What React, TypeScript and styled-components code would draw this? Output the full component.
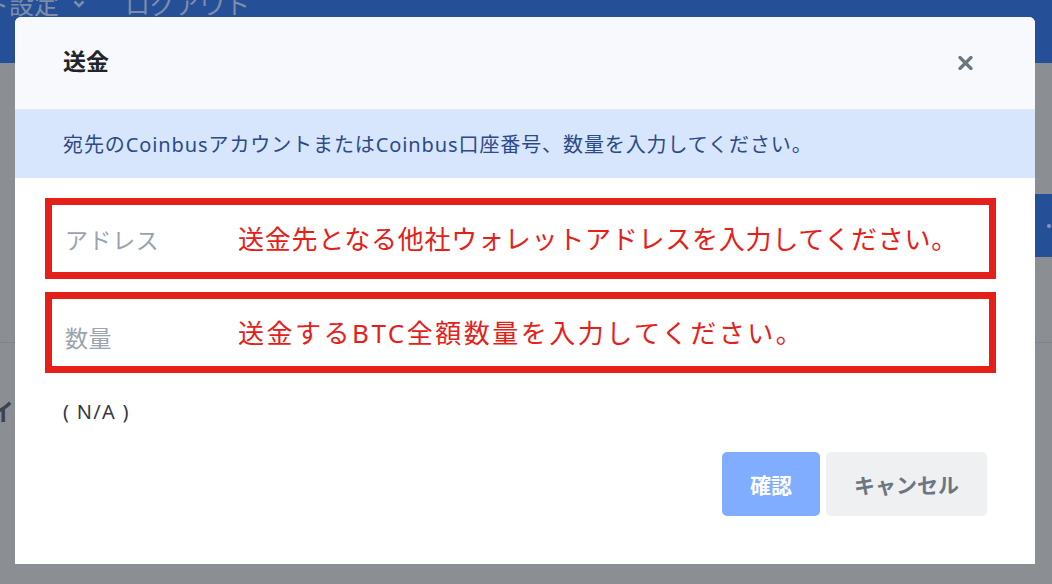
import styled, { createGlobalStyle } from "styled-components";

const GlobalStyle = createGlobalStyle`
  html, body {
    margin: 0;
    padding: 0;
    overflow: hidden;
  }
  body {
    font-family: "Noto Sans", "Noto Sans CJK JP", sans-serif;
  }
`;

const colors = {
  navBlue: "#254f96",
  backdrop: "#8b8e93",
  headerBg: "#f8f9fd",
  infoBg: "#d7e5fd",
  infoText: "#2b4a88",
  red: "#e52019",
  label: "#9aa3ae",
  primary: "#80adff",
  light: "#eff0f2",
  muted: "#6c7683",
};

/* background page, seen through the dimmed backdrop */
const Page = styled.div`
  position: relative;
  width: 100vw;
  height: 100vh;
  overflow: hidden;
  background: ${colors.backdrop};
  display: flex;
  flex-direction: column;
`;

const Nav = styled.nav`
  height: 63px;
  flex-shrink: 0;
  background: ${colors.navBlue};
  display: flex;
  align-items: flex-start;
  gap: 40px;
  font-size: 25px;
  color: #7f8dab;
  overflow: hidden;
`;

const NavItem = styled.span<{ $offset?: number }>`
  display: flex;
  align-items: center;
  gap: 14px;
  margin-top: -13px;
  line-height: 34px;
  margin-left: ${(p) => p.$offset ?? 0}px;
`;

const BgContent = styled.div`
  flex: 1;
  display: flex;
  flex-direction: column;
`;

const BgButtonRow = styled.div`
  display: flex;
  justify-content: flex-end;
  padding-top: 131px;
`;

const BgButton = styled.div`
  width: 60px;
  height: 63px;
  background: ${colors.navBlue};
  display: flex;
  align-items: center;
  justify-content: flex-end;
  padding-right: 1px;
  box-sizing: border-box;
  &::after {
    content: "";
    width: 4px;
    height: 4px;
    border-radius: 50%;
    background: #8a97b5;
  }
`;

const BgDivider = styled.div`
  margin-top: 85px;
  height: 1px;
  background: #7d828d;
`;

const BgHeading = styled.div`
  margin-top: 50px;
  margin-left: -10px;
  font-size: 24px;
  font-weight: 700;
  color: #3c4250;
`;

/* modal */
const Modal = styled.div`
  position: absolute;
  top: 17px;
  left: 15px;
  width: 1020px;
  height: 547px;
  background: #fff;
  border-radius: 6px 6px 0 0;
  overflow: hidden;
  display: flex;
  flex-direction: column;
`;

const ModalHeader = styled.div`
  height: 92px;
  flex-shrink: 0;
  background: ${colors.headerBg};
  border-bottom: 1px solid #e3e7ee;
  display: flex;
  align-items: center;
  justify-content: space-between;
  padding: 0 62px 0 48px;
`;

const Title = styled.h2`
  margin: 0 0 6px;
  font-size: 23px;
  font-weight: 700;
  color: #212529;
`;

const CloseButton = styled.button`
  border: none;
  background: none;
  padding: 0;
  display: flex;
  cursor: pointer;
`;

const InfoBand = styled.div`
  height: 68px;
  flex-shrink: 0;
  background: ${colors.infoBg};
  display: flex;
  align-items: center;
  padding-left: 48px;
  padding-bottom: 2px;
  box-sizing: border-box;
  font-size: 20px;
  letter-spacing: 0.9px;
  color: ${colors.infoText};
`;

const ModalBody = styled.div`
  padding: 20px 39px 0 30px;
  display: flex;
  flex-direction: column;
  gap: 13px;
`;

const FieldBox = styled.div`
  height: 81px;
  box-sizing: border-box;
  border: 7px solid ${colors.red};
  display: flex;
  align-items: center;
  padding-left: 13px;
`;

const FieldLabel = styled.span<{ $shift?: number }>`
  width: 173px;
  flex-shrink: 0;
  font-size: 23px;
  letter-spacing: 0.6px;
  color: ${colors.label};
  margin-top: ${(p) => p.$shift ?? 0}px;
`;

const Note = styled.span<{ $spacing?: number }>`
  font-size: 26px;
  color: ${colors.red};
  letter-spacing: ${(p) => p.$spacing ?? 0}px;
  margin-top: -2px;
  white-space: nowrap;
`;

const Balance = styled.div`
  margin: 14px 0 0 18px;
  font-size: 20px;
  line-height: 24px;
  letter-spacing: 1.3px;
  color: #343a40;
`;

const Footer = styled.div`
  display: flex;
  justify-content: flex-end;
  gap: 6px;
  margin: 15px 9px 0 0;
`;

const Button = styled.button<{ $variant: "primary" | "light" }>`
  height: 64px;
  border: none;
  border-radius: 5px;
  padding: 0 28px;
  font-family: inherit;
  font-size: 21px;
  font-weight: 700;
  background: ${(p) => (p.$variant === "primary" ? colors.primary : colors.light)};
  color: ${(p) => (p.$variant === "primary" ? "#fff" : colors.muted)};
  cursor: pointer;
`;

const Chevron = () => (
  <svg width="12" height="8" viewBox="0 0 12 8">
    <path d="M1.5 1.5 6 6l4.5-4.5" fill="none" stroke="#7f8dab" strokeWidth="2.6" />
  </svg>
);

const CloseIcon = () => (
  <svg width="15" height="14" viewBox="0 0 15 14">
    <path d="M2 1.5 13 12.5M13 1.5 2 12.5" stroke="#6c7683" strokeWidth="3.2" strokeLinecap="round" />
  </svg>
);

const App = () => {
  return (
    <Page>
      <GlobalStyle />
      <Nav>
        <NavItem $offset={-16}>
          ト設定 <Chevron />
        </NavItem>
        <NavItem>ログアウト</NavItem>
      </Nav>
      <BgContent>
        <BgButtonRow>
          <BgButton />
        </BgButtonRow>
        <BgDivider />
        <BgHeading>イ.</BgHeading>
      </BgContent>

      <Modal>
        <ModalHeader>
          <Title>送金</Title>
          <CloseButton>
            <CloseIcon />
          </CloseButton>
        </ModalHeader>
        <InfoBand>宛先のCoinbusアカウントまたはCoinbus口座番号、数量を入力してください。</InfoBand>
        <ModalBody>
          <FieldBox>
            <FieldLabel>アドレス</FieldLabel>
            <Note $spacing={0.75}>送金先となる他社ウォレットアドレスを入力してください。</Note>
          </FieldBox>
          <FieldBox>
            <FieldLabel $shift={8}>数量</FieldLabel>
            <Note $spacing={2.5}>送金するBTC全額数量を入力してください。</Note>
          </FieldBox>
          <Balance>( N/A )</Balance>
          <Footer>
            <Button $variant="primary">確認</Button>
            <Button $variant="light">キャンセル</Button>
          </Footer>
        </ModalBody>
      </Modal>
    </Page>
  );
};

export default App;
